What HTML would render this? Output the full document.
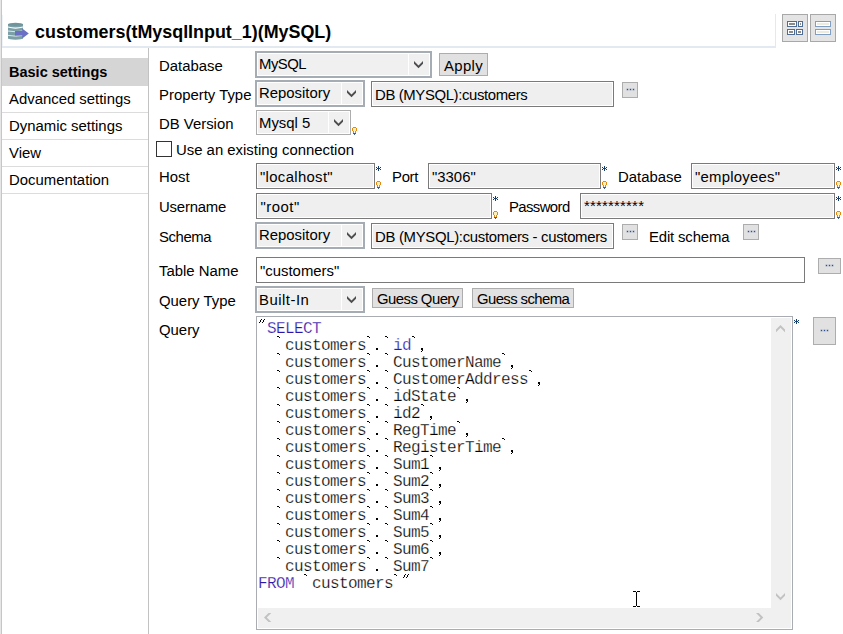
<!DOCTYPE html>
<html><head><meta charset="utf-8">
<style>
html,body{margin:0;padding:0;}
body{width:843px;height:634px;overflow:hidden;background:#fff;position:relative;font-family:"Liberation Sans",sans-serif;}
.a{position:absolute;box-sizing:border-box;}
.t{position:absolute;font-size:14.9px;line-height:20px;white-space:pre;color:#000;}
.cb2{position:absolute;box-sizing:border-box;border:2px solid #a5acb4;background:#f0f0f0;box-shadow:inset 0 0 0 1px #fff;}
.cb1{position:absolute;box-sizing:border-box;border:1px solid #adadad;background:#f0f0f0;box-shadow:inset 0 0 0 1px #fff;}
.dv{position:absolute;top:0;bottom:0;width:1px;background:#fff;}
.tf{position:absolute;box-sizing:border-box;border:1px solid #7a7a7a;background:#efefef;box-shadow:inset 0 0 0 1px #fff;}
.btn{position:absolute;box-sizing:border-box;border:1px solid #adadad;background:#e1e1e1;}
.dots{position:absolute;box-sizing:border-box;border:1px solid #adadad;background:#e1e1e1;}
.dots i{position:absolute;width:1px;height:1px;background:#2f4f8f;top:6px;box-shadow:0 0 0.6px 0.4px rgba(60,90,150,0.6);}
.ast{position:absolute;font-size:13px;line-height:13px;color:#1c3c6c;font-weight:bold;}
.sep{position:absolute;left:2px;width:146px;height:1px;background:#dcdcdc;}
svg{position:absolute;overflow:visible;}
.code{position:absolute;font-family:"Liberation Mono",monospace;font-size:16px;letter-spacing:-0.6px;line-height:17px;white-space:pre;color:#000;-webkit-text-stroke:0.25px #fff;}
.kw{color:#2d14aa;}
.h{color:transparent;}
</style></head><body>

<!-- left border -->
<div class="a" style="left:0;top:0;width:1px;height:634px;background:#e6e6e6"></div><div class="a" style="left:1px;top:0;width:1px;height:634px;background:#c6c6c6"></div><div class="a" style="left:2px;top:15px;width:1px;height:31px;background:#eef3f8"></div>

<!-- title -->
<svg style="left:7px;top:22px" width="23" height="19" viewBox="0 0 23 19">
  <rect x="1" y="2" width="15" height="14.5" fill="#7b9fa6"/>
  <ellipse cx="8.5" cy="2.4" rx="7.5" ry="1.7" fill="#6f949c"/>
  <ellipse cx="8.5" cy="16.2" rx="7.5" ry="1.6" fill="#7b9fa6"/>
  <path d="M1 5 Q8.5 7.2 16 5" stroke="#ffffff" stroke-width="1.1" fill="none"/>
  <path d="M1 9 Q8.5 10.5 16 9" stroke="#e8eff0" stroke-width="0.9" fill="none"/>
  <path d="M1 13.4 Q8.5 14.9 16 13.4" stroke="#e8eff0" stroke-width="0.9" fill="none"/>
  <path d="M8 9 H15.2 V6.5 L21.8 11.4 L15.2 16.6 V13.5 H8 Z" fill="#6b70c4"/>
</svg>
<div class="t" style="left:35px;top:19.5px;font-size:17.9px;line-height:24px;font-weight:bold;">customers(tMysqlInput_1)(MySQL)</div>
<div class="a" style="left:2px;top:46px;width:774px;height:2px;background:#e3e9f0"></div>
<div class="a" style="left:775px;top:14px;width:1px;height:33px;background:#e3e9f0"></div>

<!-- top right buttons -->
<div class="a" style="left:782px;top:14px;width:26px;height:28px;border:1px solid #a8a8a8;background:#e4e4e4"></div>
<div class="a" style="left:787px;top:21px;width:10px;height:6px;border:1px solid #4f6d92;background:#fff"></div>
<div class="a" style="left:789px;top:23px;width:6px;height:2px;background:#8c8c8c"></div>
<div class="a" style="left:798px;top:21px;width:5px;height:6px;border:1px solid #4f6d92;background:#fff"></div><div class="a" style="left:800px;top:23px;width:1px;height:2px;background:#8c8c8c"></div>
<div class="a" style="left:787px;top:29px;width:8px;height:6px;border:1px solid #4f6d92;background:#fff"></div>
<div class="a" style="left:789px;top:31px;width:4px;height:2px;background:#8c8c8c"></div>
<div class="a" style="left:796px;top:29px;width:7px;height:6px;border:1px solid #4f6d92;background:#fff"></div>
<div class="a" style="left:798px;top:31px;width:3px;height:2px;background:#8c8c8c"></div>
<div class="a" style="left:810px;top:14px;width:26px;height:28px;border:1px solid #a8a8a8;background:#e4e4e4"></div>
<div class="a" style="left:815px;top:21px;width:16px;height:6px;border:1px solid #7f9ec4;background:#ecebdc;box-shadow:inset 0 0 0 1px #fff"></div>
<div class="a" style="left:815px;top:29px;width:16px;height:6px;border:1px solid #7f9ec4;background:#ecebdc;box-shadow:inset 0 0 0 1px #fff"></div>

<!-- sidebar -->
<div class="a" style="left:148px;top:48px;width:1px;height:586px;background:#c2c2c2"></div>
<div class="a" style="left:2px;top:58px;width:146px;height:28px;background:#d5d5d5"></div>
<div class="sep" style="top:112px"></div>
<div class="sep" style="top:139px"></div>
<div class="sep" style="top:166px"></div>
<div class="sep" style="top:193px"></div>
<div class="t" style="left:9px;top:62px;font-weight:bold;font-size:14.5px">Basic settings</div>
<div class="t" style="left:9px;top:89px">Advanced settings</div>
<div class="t" style="left:9px;top:116px">Dynamic settings</div>
<div class="t" style="left:9px;top:143px">View</div>
<div class="t" style="left:9px;top:170px">Documentation</div>

<!-- labels -->
<div class="t" style="left:159px;top:56px">Database</div>
<div class="t" style="left:159px;top:85px">Property Type</div>
<div class="t" style="left:159px;top:114px">DB Version</div>
<div class="t" style="left:176px;top:140px">Use an existing connection</div>
<div class="t" style="left:159px;top:167px">Host</div>
<div class="t" style="left:392px;top:167px;letter-spacing:-0.3px">Port</div>
<div class="t" style="left:618px;top:167px">Database</div>
<div class="t" style="left:159px;top:197px;letter-spacing:-0.2px">Username</div>
<div class="t" style="left:509px;top:197px;letter-spacing:-0.6px">Password</div>
<div class="t" style="left:159px;top:227px;letter-spacing:-0.4px">Schema</div>
<div class="t" style="left:649px;top:227px;letter-spacing:-0.15px">Edit schema</div>
<div class="t" style="left:159px;top:261px">Table Name</div>
<div class="t" style="left:159px;top:291px">Query Type</div>
<div class="t" style="left:159px;top:320px">Query</div>

<!-- row 1 -->
<div class="cb2" style="left:255px;top:51px;width:177px;height:27px"><div class="dv" style="left:151px"></div></div>
<div class="t" style="left:259px;top:54px;letter-spacing:-0.5px">MySQL</div>
<svg style="left:413px;top:60px" width="11" height="9"><path d="M1 1 L5.5 5.5 L10 1 L10 3.8 L5.5 8.3 L1 3.8 Z" fill="#4e4e4e"/></svg>
<div class="btn" style="left:439px;top:53px;width:49px;height:23px"></div>
<div class="t" style="left:444px;top:56px;letter-spacing:0.35px">Apply</div>

<!-- row 2 -->
<div class="cb2" style="left:255px;top:80px;width:110px;height:27px"><div class="dv" style="left:84px"></div></div>
<div class="t" style="left:259px;top:83px">Repository</div>
<svg style="left:346px;top:89px" width="11" height="9"><path d="M1 1 L5.5 5.5 L10 1 L10 3.8 L5.5 8.3 L1 3.8 Z" fill="#4e4e4e"/></svg>
<div class="tf" style="left:371px;top:81px;width:243px;height:26px"></div>
<div class="t" style="left:375px;top:85px;letter-spacing:-0.37px">DB (MYSQL):customers</div>
<div class="dots" style="left:622px;top:82px;width:16px;height:16px"><i style="left:4px"></i><i style="left:7px"></i><i style="left:10px"></i></div>

<!-- row 3 -->
<div class="cb1" style="left:256px;top:110px;width:95px;height:25px"><div class="dv" style="left:71px"></div></div>
<div class="t" style="left:259px;top:113px">Mysql 5</div>
<svg style="left:333px;top:118px" width="11" height="9"><path d="M1 1 L5.5 5.5 L10 1 L10 3.8 L5.5 8.3 L1 3.8 Z" fill="#4e4e4e"/></svg>

<!-- checkbox -->
<div class="a" style="left:156px;top:141px;width:16px;height:16px;border:1px solid #333"></div>

<!-- row host -->
<div class="tf" style="left:256px;top:163px;width:119px;height:26px"></div>
<div class="t" style="left:260px;top:167px;letter-spacing:0.33px">"localhost"</div>
<div class="tf" style="left:428px;top:163px;width:173px;height:26px"></div>
<div class="t" style="left:432px;top:167px">"3306"</div>
<div class="tf" style="left:691px;top:163px;width:144px;height:26px"></div>
<div class="t" style="left:695px;top:167px;letter-spacing:0.25px">"employees"</div>

<!-- row user -->
<div class="tf" style="left:256px;top:193px;width:236px;height:26px"></div>
<div class="t" style="left:260.5px;top:197px;letter-spacing:0.5px">"root"</div>
<div class="tf" style="left:580px;top:193px;width:255px;height:26px"></div>
<div class="t" style="left:584px;top:196px;letter-spacing:0.22px">**********</div>

<!-- row schema -->
<div class="cb2" style="left:255px;top:222px;width:110px;height:27px"><div class="dv" style="left:84px"></div></div>
<div class="t" style="left:259px;top:225px">Repository</div>
<svg style="left:346px;top:231px" width="11" height="9"><path d="M1 1 L5.5 5.5 L10 1 L10 3.8 L5.5 8.3 L1 3.8 Z" fill="#4e4e4e"/></svg>
<div class="tf" style="left:371px;top:223px;width:243px;height:26px"></div>
<div class="t" style="left:375px;top:227px;letter-spacing:-0.3px">DB (MYSQL):customers - customers</div>
<div class="dots" style="left:622px;top:224px;width:16px;height:16px"><i style="left:4px"></i><i style="left:7px"></i><i style="left:10px"></i></div>
<div class="dots" style="left:743px;top:224px;width:16px;height:16px"><i style="left:4px"></i><i style="left:7px"></i><i style="left:10px"></i></div>

<!-- table name -->
<div class="tf" style="left:256px;top:257px;width:549px;height:26px;background:#fff"></div>
<div class="t" style="left:260px;top:261px">"customers"</div>
<div class="dots" style="left:818px;top:258px;width:23px;height:16px"><i style="left:7px"></i><i style="left:10px"></i><i style="left:13px"></i></div>

<!-- query type -->
<div class="cb2" style="left:255px;top:286px;width:110px;height:27px"><div class="dv" style="left:84px"></div></div>
<div class="t" style="left:259px;top:289.5px;letter-spacing:0.5px">Built-In</div>
<svg style="left:346px;top:295px" width="11" height="9"><path d="M1 1 L5.5 5.5 L10 1 L10 3.8 L5.5 8.3 L1 3.8 Z" fill="#4e4e4e"/></svg>
<div class="btn" style="left:372px;top:288px;width:91px;height:20px"></div>
<div class="t" style="left:377px;top:288.7px;letter-spacing:-0.55px">Guess Query</div>
<div class="btn" style="left:472px;top:288px;width:102px;height:20px"></div>
<div class="t" style="left:477px;top:288.7px;letter-spacing:-0.6px">Guess schema</div>

<!-- query area -->
<div class="a" style="left:256px;top:316px;width:537px;height:314px;border:1px solid #a9adb3;background:#fff"></div>
<div class="a" style="left:771px;top:318px;width:20px;height:310px;background:#f0f0f0"></div>
<div class="a" style="left:258px;top:608px;width:533px;height:20px;background:#f0f0f0"></div>
<svg style="left:775px;top:324px" width="11" height="10"><path d="M1 8.3 L5.5 3.8 L10 8.3 L10 5.5 L5.5 1 L1 5.5 Z" fill="#c2c2c2"/></svg>
<svg style="left:775px;top:592px" width="11" height="10"><path d="M1 1 L5.5 5.5 L10 1 L10 3.8 L5.5 8.3 L1 3.8 Z" fill="#c2c2c2"/></svg>
<svg style="left:263px;top:612px" width="10" height="11"><path d="M8.3 1 L3.8 5.5 L8.3 10 L5.5 10 L1 5.5 L5.5 1 Z" fill="#c2c2c2"/></svg>
<svg style="left:755px;top:612px" width="10" height="11"><path d="M1 1 L5.5 5.5 L1 10 L3.8 10 L8.3 5.5 L3.8 1 Z" fill="#c2c2c2"/></svg>
<div class="code" style="left:258px;top:321px"><span class="h">&quot;</span><span class="kw">SELECT</span>
  <span class="h">`</span>customers<span class="h">`</span><span class="h">.</span><span class="h">`</span><span class="kw">id</span><span class="h">`</span><span class="h">,</span>
  <span class="h">`</span>customers<span class="h">`</span><span class="h">.</span><span class="h">`</span>CustomerName<span class="h">`</span><span class="h">,</span>
  <span class="h">`</span>customers<span class="h">`</span><span class="h">.</span><span class="h">`</span>CustomerAddress<span class="h">`</span><span class="h">,</span>
  <span class="h">`</span>customers<span class="h">`</span><span class="h">.</span><span class="h">`</span>idState<span class="h">`</span><span class="h">,</span>
  <span class="h">`</span>customers<span class="h">`</span><span class="h">.</span><span class="h">`</span>id2<span class="h">`</span><span class="h">,</span>
  <span class="h">`</span>customers<span class="h">`</span><span class="h">.</span><span class="h">`</span>RegTime<span class="h">`</span><span class="h">,</span>
  <span class="h">`</span>customers<span class="h">`</span><span class="h">.</span><span class="h">`</span>RegisterTime<span class="h">`</span><span class="h">,</span>
  <span class="h">`</span>customers<span class="h">`</span><span class="h">.</span><span class="h">`</span>Sum1<span class="h">`</span><span class="h">,</span>
  <span class="h">`</span>customers<span class="h">`</span><span class="h">.</span><span class="h">`</span>Sum2<span class="h">`</span><span class="h">,</span>
  <span class="h">`</span>customers<span class="h">`</span><span class="h">.</span><span class="h">`</span>Sum3<span class="h">`</span><span class="h">,</span>
  <span class="h">`</span>customers<span class="h">`</span><span class="h">.</span><span class="h">`</span>Sum4<span class="h">`</span><span class="h">,</span>
  <span class="h">`</span>customers<span class="h">`</span><span class="h">.</span><span class="h">`</span>Sum5<span class="h">`</span><span class="h">,</span>
  <span class="h">`</span>customers<span class="h">`</span><span class="h">.</span><span class="h">`</span>Sum6<span class="h">`</span><span class="h">,</span>
  <span class="h">`</span>customers<span class="h">`</span><span class="h">.</span><span class="h">`</span>Sum7<span class="h">`</span>
<span class="kw">FROM</span> <span class="h">`</span>customers<span class="h">`</span><span class="h">&quot;</span></div>
<svg style="left:258px;top:319px" width="300" height="260" shape-rendering="crispEdges" fill="#000"><rect x="1" y="3" width="1" height="1"/><rect x="2" y="1" width="1" height="2"/><rect x="3" y="0" width="1" height="1"/><rect x="4" y="3" width="1" height="1"/><rect x="5" y="1" width="1" height="2"/><rect x="6" y="0" width="1" height="1"/><rect x="19" y="17" width="2" height="1"/><rect x="21" y="18" width="1" height="1"/><rect x="109" y="17" width="2" height="1"/><rect x="111" y="18" width="1" height="1"/><rect x="118" y="29" width="2" height="2"/><rect x="127" y="17" width="2" height="1"/><rect x="129" y="18" width="1" height="1"/><rect x="154" y="17" width="2" height="1"/><rect x="156" y="18" width="1" height="1"/><rect x="163" y="29" width="2" height="2"/><rect x="164" y="31" width="1" height="1"/><rect x="163" y="32" width="1" height="1"/><rect x="19" y="34" width="2" height="1"/><rect x="21" y="35" width="1" height="1"/><rect x="109" y="34" width="2" height="1"/><rect x="111" y="35" width="1" height="1"/><rect x="118" y="46" width="2" height="2"/><rect x="127" y="34" width="2" height="1"/><rect x="129" y="35" width="1" height="1"/><rect x="244" y="34" width="2" height="1"/><rect x="246" y="35" width="1" height="1"/><rect x="253" y="46" width="2" height="2"/><rect x="254" y="48" width="1" height="1"/><rect x="253" y="49" width="1" height="1"/><rect x="19" y="51" width="2" height="1"/><rect x="21" y="52" width="1" height="1"/><rect x="109" y="51" width="2" height="1"/><rect x="111" y="52" width="1" height="1"/><rect x="118" y="63" width="2" height="2"/><rect x="127" y="51" width="2" height="1"/><rect x="129" y="52" width="1" height="1"/><rect x="271" y="51" width="2" height="1"/><rect x="273" y="52" width="1" height="1"/><rect x="280" y="63" width="2" height="2"/><rect x="281" y="65" width="1" height="1"/><rect x="280" y="66" width="1" height="1"/><rect x="19" y="68" width="2" height="1"/><rect x="21" y="69" width="1" height="1"/><rect x="109" y="68" width="2" height="1"/><rect x="111" y="69" width="1" height="1"/><rect x="118" y="80" width="2" height="2"/><rect x="127" y="68" width="2" height="1"/><rect x="129" y="69" width="1" height="1"/><rect x="199" y="68" width="2" height="1"/><rect x="201" y="69" width="1" height="1"/><rect x="208" y="80" width="2" height="2"/><rect x="209" y="82" width="1" height="1"/><rect x="208" y="83" width="1" height="1"/><rect x="19" y="85" width="2" height="1"/><rect x="21" y="86" width="1" height="1"/><rect x="109" y="85" width="2" height="1"/><rect x="111" y="86" width="1" height="1"/><rect x="118" y="97" width="2" height="2"/><rect x="127" y="85" width="2" height="1"/><rect x="129" y="86" width="1" height="1"/><rect x="163" y="85" width="2" height="1"/><rect x="165" y="86" width="1" height="1"/><rect x="172" y="97" width="2" height="2"/><rect x="173" y="99" width="1" height="1"/><rect x="172" y="100" width="1" height="1"/><rect x="19" y="102" width="2" height="1"/><rect x="21" y="103" width="1" height="1"/><rect x="109" y="102" width="2" height="1"/><rect x="111" y="103" width="1" height="1"/><rect x="118" y="114" width="2" height="2"/><rect x="127" y="102" width="2" height="1"/><rect x="129" y="103" width="1" height="1"/><rect x="199" y="102" width="2" height="1"/><rect x="201" y="103" width="1" height="1"/><rect x="208" y="114" width="2" height="2"/><rect x="209" y="116" width="1" height="1"/><rect x="208" y="117" width="1" height="1"/><rect x="19" y="119" width="2" height="1"/><rect x="21" y="120" width="1" height="1"/><rect x="109" y="119" width="2" height="1"/><rect x="111" y="120" width="1" height="1"/><rect x="118" y="131" width="2" height="2"/><rect x="127" y="119" width="2" height="1"/><rect x="129" y="120" width="1" height="1"/><rect x="244" y="119" width="2" height="1"/><rect x="246" y="120" width="1" height="1"/><rect x="253" y="131" width="2" height="2"/><rect x="254" y="133" width="1" height="1"/><rect x="253" y="134" width="1" height="1"/><rect x="19" y="136" width="2" height="1"/><rect x="21" y="137" width="1" height="1"/><rect x="109" y="136" width="2" height="1"/><rect x="111" y="137" width="1" height="1"/><rect x="118" y="148" width="2" height="2"/><rect x="127" y="136" width="2" height="1"/><rect x="129" y="137" width="1" height="1"/><rect x="172" y="136" width="2" height="1"/><rect x="174" y="137" width="1" height="1"/><rect x="181" y="148" width="2" height="2"/><rect x="182" y="150" width="1" height="1"/><rect x="181" y="151" width="1" height="1"/><rect x="19" y="153" width="2" height="1"/><rect x="21" y="154" width="1" height="1"/><rect x="109" y="153" width="2" height="1"/><rect x="111" y="154" width="1" height="1"/><rect x="118" y="165" width="2" height="2"/><rect x="127" y="153" width="2" height="1"/><rect x="129" y="154" width="1" height="1"/><rect x="172" y="153" width="2" height="1"/><rect x="174" y="154" width="1" height="1"/><rect x="181" y="165" width="2" height="2"/><rect x="182" y="167" width="1" height="1"/><rect x="181" y="168" width="1" height="1"/><rect x="19" y="170" width="2" height="1"/><rect x="21" y="171" width="1" height="1"/><rect x="109" y="170" width="2" height="1"/><rect x="111" y="171" width="1" height="1"/><rect x="118" y="182" width="2" height="2"/><rect x="127" y="170" width="2" height="1"/><rect x="129" y="171" width="1" height="1"/><rect x="172" y="170" width="2" height="1"/><rect x="174" y="171" width="1" height="1"/><rect x="181" y="182" width="2" height="2"/><rect x="182" y="184" width="1" height="1"/><rect x="181" y="185" width="1" height="1"/><rect x="19" y="187" width="2" height="1"/><rect x="21" y="188" width="1" height="1"/><rect x="109" y="187" width="2" height="1"/><rect x="111" y="188" width="1" height="1"/><rect x="118" y="199" width="2" height="2"/><rect x="127" y="187" width="2" height="1"/><rect x="129" y="188" width="1" height="1"/><rect x="172" y="187" width="2" height="1"/><rect x="174" y="188" width="1" height="1"/><rect x="181" y="199" width="2" height="2"/><rect x="182" y="201" width="1" height="1"/><rect x="181" y="202" width="1" height="1"/><rect x="19" y="204" width="2" height="1"/><rect x="21" y="205" width="1" height="1"/><rect x="109" y="204" width="2" height="1"/><rect x="111" y="205" width="1" height="1"/><rect x="118" y="216" width="2" height="2"/><rect x="127" y="204" width="2" height="1"/><rect x="129" y="205" width="1" height="1"/><rect x="172" y="204" width="2" height="1"/><rect x="174" y="205" width="1" height="1"/><rect x="181" y="216" width="2" height="2"/><rect x="182" y="218" width="1" height="1"/><rect x="181" y="219" width="1" height="1"/><rect x="19" y="221" width="2" height="1"/><rect x="21" y="222" width="1" height="1"/><rect x="109" y="221" width="2" height="1"/><rect x="111" y="222" width="1" height="1"/><rect x="118" y="233" width="2" height="2"/><rect x="127" y="221" width="2" height="1"/><rect x="129" y="222" width="1" height="1"/><rect x="172" y="221" width="2" height="1"/><rect x="174" y="222" width="1" height="1"/><rect x="181" y="233" width="2" height="2"/><rect x="182" y="235" width="1" height="1"/><rect x="181" y="236" width="1" height="1"/><rect x="19" y="238" width="2" height="1"/><rect x="21" y="239" width="1" height="1"/><rect x="109" y="238" width="2" height="1"/><rect x="111" y="239" width="1" height="1"/><rect x="118" y="250" width="2" height="2"/><rect x="127" y="238" width="2" height="1"/><rect x="129" y="239" width="1" height="1"/><rect x="172" y="238" width="2" height="1"/><rect x="174" y="239" width="1" height="1"/><rect x="46" y="255" width="2" height="1"/><rect x="48" y="256" width="1" height="1"/><rect x="136" y="255" width="2" height="1"/><rect x="138" y="256" width="1" height="1"/><rect x="145" y="258" width="1" height="1"/><rect x="146" y="256" width="1" height="2"/><rect x="147" y="255" width="1" height="1"/><rect x="148" y="258" width="1" height="1"/><rect x="149" y="256" width="1" height="2"/><rect x="150" y="255" width="1" height="1"/></svg>
<!-- I-beam -->
<svg style="left:633px;top:591px" width="7" height="16" shape-rendering="crispEdges"><rect x="0" y="0" width="3" height="1"/><rect x="4" y="0" width="3" height="1"/><rect x="3" y="1" width="1" height="14"/><rect x="0" y="15" width="3" height="1"/><rect x="4" y="15" width="3" height="1"/></svg>
<div class="dots" style="left:813px;top:317px;width:23px;height:28px"><i style="left:7px;top:12px"></i><i style="left:10px;top:12px"></i><i style="left:13px;top:12px"></i></div>

<!-- asterisks & bulbs -->
<svg style="left:376px;top:166px" width="5" height="5" shape-rendering="crispEdges"><rect x="2" y="0" width="1" height="1" fill="#143c6c"/><rect x="0" y="1" width="1" height="1" fill="#143c6c"/><rect x="2" y="1" width="1" height="1" fill="#143c6c"/><rect x="4" y="1" width="1" height="1" fill="#143c6c"/><rect x="1" y="2" width="3" height="1" fill="#143c6c"/><rect x="0" y="3" width="1" height="1" fill="#143c6c"/><rect x="2" y="3" width="1" height="1" fill="#143c6c"/><rect x="4" y="3" width="1" height="1" fill="#143c6c"/><rect x="2" y="4" width="1" height="1" fill="#143c6c"/></svg>
<svg style="left:376px;top:181px" width="5" height="8" shape-rendering="crispEdges"><rect x="1" y="1" width="3" height="3" fill="#fff0b8"/><rect x="2" y="4" width="1" height="2" fill="#ffffff"/><rect x="1" y="0" width="3" height="1" fill="#e5870f"/><rect x="0" y="1" width="1" height="3" fill="#e5870f"/><rect x="4" y="1" width="1" height="3" fill="#e5870f"/><rect x="1" y="4" width="1" height="2" fill="#e5870f"/><rect x="3" y="4" width="1" height="2" fill="#e5870f"/><rect x="1" y="6" width="3" height="1" fill="#3f6191"/><rect x="2" y="7" width="1" height="1" fill="#3f6191"/></svg>
<svg style="left:602px;top:166px" width="5" height="5" shape-rendering="crispEdges"><rect x="2" y="0" width="1" height="1" fill="#143c6c"/><rect x="0" y="1" width="1" height="1" fill="#143c6c"/><rect x="2" y="1" width="1" height="1" fill="#143c6c"/><rect x="4" y="1" width="1" height="1" fill="#143c6c"/><rect x="1" y="2" width="3" height="1" fill="#143c6c"/><rect x="0" y="3" width="1" height="1" fill="#143c6c"/><rect x="2" y="3" width="1" height="1" fill="#143c6c"/><rect x="4" y="3" width="1" height="1" fill="#143c6c"/><rect x="2" y="4" width="1" height="1" fill="#143c6c"/></svg>
<svg style="left:602px;top:181px" width="5" height="8" shape-rendering="crispEdges"><rect x="1" y="1" width="3" height="3" fill="#fff0b8"/><rect x="2" y="4" width="1" height="2" fill="#ffffff"/><rect x="1" y="0" width="3" height="1" fill="#e5870f"/><rect x="0" y="1" width="1" height="3" fill="#e5870f"/><rect x="4" y="1" width="1" height="3" fill="#e5870f"/><rect x="1" y="4" width="1" height="2" fill="#e5870f"/><rect x="3" y="4" width="1" height="2" fill="#e5870f"/><rect x="1" y="6" width="3" height="1" fill="#3f6191"/><rect x="2" y="7" width="1" height="1" fill="#3f6191"/></svg>
<svg style="left:836px;top:166px" width="5" height="5" shape-rendering="crispEdges"><rect x="2" y="0" width="1" height="1" fill="#143c6c"/><rect x="0" y="1" width="1" height="1" fill="#143c6c"/><rect x="2" y="1" width="1" height="1" fill="#143c6c"/><rect x="4" y="1" width="1" height="1" fill="#143c6c"/><rect x="1" y="2" width="3" height="1" fill="#143c6c"/><rect x="0" y="3" width="1" height="1" fill="#143c6c"/><rect x="2" y="3" width="1" height="1" fill="#143c6c"/><rect x="4" y="3" width="1" height="1" fill="#143c6c"/><rect x="2" y="4" width="1" height="1" fill="#143c6c"/></svg>
<svg style="left:836px;top:181px" width="5" height="8" shape-rendering="crispEdges"><rect x="1" y="1" width="3" height="3" fill="#fff0b8"/><rect x="2" y="4" width="1" height="2" fill="#ffffff"/><rect x="1" y="0" width="3" height="1" fill="#e5870f"/><rect x="0" y="1" width="1" height="3" fill="#e5870f"/><rect x="4" y="1" width="1" height="3" fill="#e5870f"/><rect x="1" y="4" width="1" height="2" fill="#e5870f"/><rect x="3" y="4" width="1" height="2" fill="#e5870f"/><rect x="1" y="6" width="3" height="1" fill="#3f6191"/><rect x="2" y="7" width="1" height="1" fill="#3f6191"/></svg>
<svg style="left:493px;top:196px" width="5" height="5" shape-rendering="crispEdges"><rect x="2" y="0" width="1" height="1" fill="#143c6c"/><rect x="0" y="1" width="1" height="1" fill="#143c6c"/><rect x="2" y="1" width="1" height="1" fill="#143c6c"/><rect x="4" y="1" width="1" height="1" fill="#143c6c"/><rect x="1" y="2" width="3" height="1" fill="#143c6c"/><rect x="0" y="3" width="1" height="1" fill="#143c6c"/><rect x="2" y="3" width="1" height="1" fill="#143c6c"/><rect x="4" y="3" width="1" height="1" fill="#143c6c"/><rect x="2" y="4" width="1" height="1" fill="#143c6c"/></svg>
<svg style="left:493px;top:211px" width="5" height="8" shape-rendering="crispEdges"><rect x="1" y="1" width="3" height="3" fill="#fff0b8"/><rect x="2" y="4" width="1" height="2" fill="#ffffff"/><rect x="1" y="0" width="3" height="1" fill="#e5870f"/><rect x="0" y="1" width="1" height="3" fill="#e5870f"/><rect x="4" y="1" width="1" height="3" fill="#e5870f"/><rect x="1" y="4" width="1" height="2" fill="#e5870f"/><rect x="3" y="4" width="1" height="2" fill="#e5870f"/><rect x="1" y="6" width="3" height="1" fill="#3f6191"/><rect x="2" y="7" width="1" height="1" fill="#3f6191"/></svg>
<svg style="left:836px;top:196px" width="5" height="5" shape-rendering="crispEdges"><rect x="2" y="0" width="1" height="1" fill="#143c6c"/><rect x="0" y="1" width="1" height="1" fill="#143c6c"/><rect x="2" y="1" width="1" height="1" fill="#143c6c"/><rect x="4" y="1" width="1" height="1" fill="#143c6c"/><rect x="1" y="2" width="3" height="1" fill="#143c6c"/><rect x="0" y="3" width="1" height="1" fill="#143c6c"/><rect x="2" y="3" width="1" height="1" fill="#143c6c"/><rect x="4" y="3" width="1" height="1" fill="#143c6c"/><rect x="2" y="4" width="1" height="1" fill="#143c6c"/></svg>
<svg style="left:836px;top:211px" width="5" height="8" shape-rendering="crispEdges"><rect x="1" y="1" width="3" height="3" fill="#fff0b8"/><rect x="2" y="4" width="1" height="2" fill="#ffffff"/><rect x="1" y="0" width="3" height="1" fill="#e5870f"/><rect x="0" y="1" width="1" height="3" fill="#e5870f"/><rect x="4" y="1" width="1" height="3" fill="#e5870f"/><rect x="1" y="4" width="1" height="2" fill="#e5870f"/><rect x="3" y="4" width="1" height="2" fill="#e5870f"/><rect x="1" y="6" width="3" height="1" fill="#3f6191"/><rect x="2" y="7" width="1" height="1" fill="#3f6191"/></svg>
<svg style="left:352px;top:127px" width="5" height="8" shape-rendering="crispEdges"><rect x="1" y="1" width="3" height="3" fill="#fff0b8"/><rect x="2" y="4" width="1" height="2" fill="#ffffff"/><rect x="1" y="0" width="3" height="1" fill="#e5870f"/><rect x="0" y="1" width="1" height="3" fill="#e5870f"/><rect x="4" y="1" width="1" height="3" fill="#e5870f"/><rect x="1" y="4" width="1" height="2" fill="#e5870f"/><rect x="3" y="4" width="1" height="2" fill="#e5870f"/><rect x="1" y="6" width="3" height="1" fill="#3f6191"/><rect x="2" y="7" width="1" height="1" fill="#3f6191"/></svg>
<svg style="left:794px;top:319px" width="5" height="5" shape-rendering="crispEdges"><rect x="2" y="0" width="1" height="1" fill="#143c6c"/><rect x="0" y="1" width="1" height="1" fill="#143c6c"/><rect x="2" y="1" width="1" height="1" fill="#143c6c"/><rect x="4" y="1" width="1" height="1" fill="#143c6c"/><rect x="1" y="2" width="3" height="1" fill="#143c6c"/><rect x="0" y="3" width="1" height="1" fill="#143c6c"/><rect x="2" y="3" width="1" height="1" fill="#143c6c"/><rect x="4" y="3" width="1" height="1" fill="#143c6c"/><rect x="2" y="4" width="1" height="1" fill="#143c6c"/></svg>
</body></html>
